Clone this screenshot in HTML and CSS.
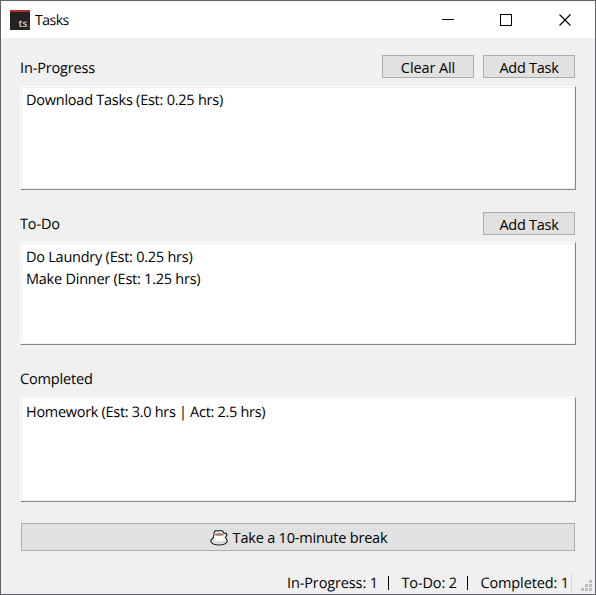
FILE: index.html
```html
<!DOCTYPE html>
<html lang="en">
<head>
<meta charset="utf-8">
<title>Tasks</title>
<link rel="stylesheet" href="styles.css">
</head>
<body>
<div class="window">
  <header class="titlebar">
    <div class="logo"><span>ts<i>.</i></span></div>
    <h1>Tasks</h1>
    <svg class="controls" width="132" height="14" viewBox="0 0 132 14" fill="none" stroke="#000" shape-rendering="crispEdges">
      <path d="M0 6.5h12"/><path d="M58.5 1.5h11v11h-11z"/>
      <path d="M117.500 1.500l11 11M128.500 1.500l-11 11" shape-rendering="auto" stroke-width="1.15"/>
    </svg>
  </header>
  <main>
    <section class="progress">
      <div class="head"><h2>In-Progress</h2><button><span class="loose">Clear All</span></button><button>Add Task</button></div>
      <ul><li>Download Tasks (Est: 0.25 hrs)</li></ul>
    </section>
    <section class="todo">
      <div class="head"><h2>To-Do</h2><button>Add Task</button></div>
      <ul><li>Do Laundry (Est: 0.25 hrs)</li><li>Make Dinner (Est: 1.25 hrs)</li></ul>
    </section>
    <section class="completed">
      <div class="head"><h2>Completed</h2></div>
      <ul><li class="tight">Homework (Est: 3.0 hrs | Act: 2.5 hrs)</li></ul>
    </section>
    <button class="break">
      <svg width="18" height="17" viewBox="0 0 18 17" stroke-linejoin="round">
        <path d="M4 5L4.500 2.500L6 1.500L8 2L11 1.500L13 2.500L14 4.500L16 4L17 6L15.500 8.500L17 11V13C15.500 15 13 16 9 16S2.500 15 1 13V11L3.500 8.500z" fill="#eee" stroke="#222" stroke-width="1.2"/>
        <ellipse cx="9" cy="5.500" rx="4.800" ry="1.700" fill="#a6765a" stroke="#eee" stroke-width=".7"/>
        <path d="M3.800 7C4.500 10 6 11.500 9 11.500S13.500 10 14.200 7" fill="#fff"/>
        <path d="M2.500 12.500Q9 15.500 15.500 12.500" fill="none" stroke="#c5c5c5"/>
      </svg>
      <span>Take a 10-minute break</span>
    </button>
  </main>
  <footer>
    <span>In-Progress: 1</span><i class="bar"></i><span>To-Do: 2</span><i class="bar"></i><span>Completed: 1</span><i class="edge"></i>
    <svg class="grip" width="11" height="11" fill="#bfbfbf" shape-rendering="crispEdges"><path d="M8 0h3v3H8zM4 4h3v3H4zM8 4h3v3H8zM0 8h3v3H0zM4 8h3v3H4zM8 8h3v3H8z"/></svg>
  </footer>
</div>
</body>
</html>
```
FILE: styles.css
```css
* { box-sizing: border-box; margin: 0; padding: 0; }
body { font: 14.5px/22px "Open Sans", "Noto Sans", sans-serif; color: #000; text-rendering: geometricPrecision; }
.window { width: 596px; height: 595px; border: 1px solid #606167; background: #f0f0f0; display: flex; flex-direction: column; overflow: hidden; white-space: nowrap; }
.titlebar { height: 37px; background: #fff; display: flex; align-items: center; padding: 0 21px 0 9px; }
.logo { width: 20px; height: 20px; background: #222; border-top: 2px solid #b62c2c; color: #ccc; font: 600 10px/10px "Open Sans", sans-serif; display: flex; justify-content: flex-end; align-items: flex-end; padding-bottom: 2px; }
.logo i { color: #b62c2c; font-style: normal; }
h1, h2 { font-weight: 400; line-height: 22px; }
h1 { margin-left: 5px; padding-top: 2px; font-size: 14px; letter-spacing: -.5px; }
h2 { font-size: 14.5px; letter-spacing: -.15px; }
.controls { margin-left: auto; }
main { padding: 17px 19px 0; display: flex; flex-direction: column; }
.head { display: flex; height: 23px; gap: 9px; padding-right: 1px; }
.head h2 { margin-right: auto; line-height: 26px; }
.progress .head h2 { line-height: 28px; }
button { width: 92px; height: 23px; border: 1px solid #adadad; background: #e1e1e1; font: inherit; line-height: 21px; letter-spacing: -.27px; color: #000; display: flex; justify-content: center; align-items: center; }
.head button { padding-top: 2px; }
.todo .head button { padding-top: 1px; }
.loose { letter-spacing: -.1px; }
ul { list-style: none; height: 104px; margin-top: 8px; background: #fff; border: 1px solid #fff; border-right-color: #828790; border-bottom-color: #828790; box-shadow: inset 0 0 0 1px #f0f0f0; padding: 3px 5px; }
li { height: 22px; line-height: 22px; letter-spacing: -.24px; }
.tight { letter-spacing: -.3px; }
.todo { margin-top: 22px; }
.todo ul { margin-top: 7px; height: 103px; padding-top: 4px; }
.completed { margin-top: 22px; }
.completed ul { margin-top: 7px; height: 105px; padding-top: 4px; }
.break { width: 554px; height: 28px; margin: 21px 0 0 1px; gap: 5px; padding-left: 1px; letter-spacing: -.2px; }
footer { height: 23px; margin-top: auto; display: flex; align-items: center; justify-content: flex-end; padding-right: 3px; }
footer span { line-height: 22px; padding-top: 2px; letter-spacing: -.12px; }
.bar { width: 1px; height: 14px; background: #000; margin: 0 12.500px 0 10px; }
.edge { width: 1px; height: 21px; background: #d7d7d7; margin-left: 2px; }
.grip { margin: 5px 0 0 9px; }
```
